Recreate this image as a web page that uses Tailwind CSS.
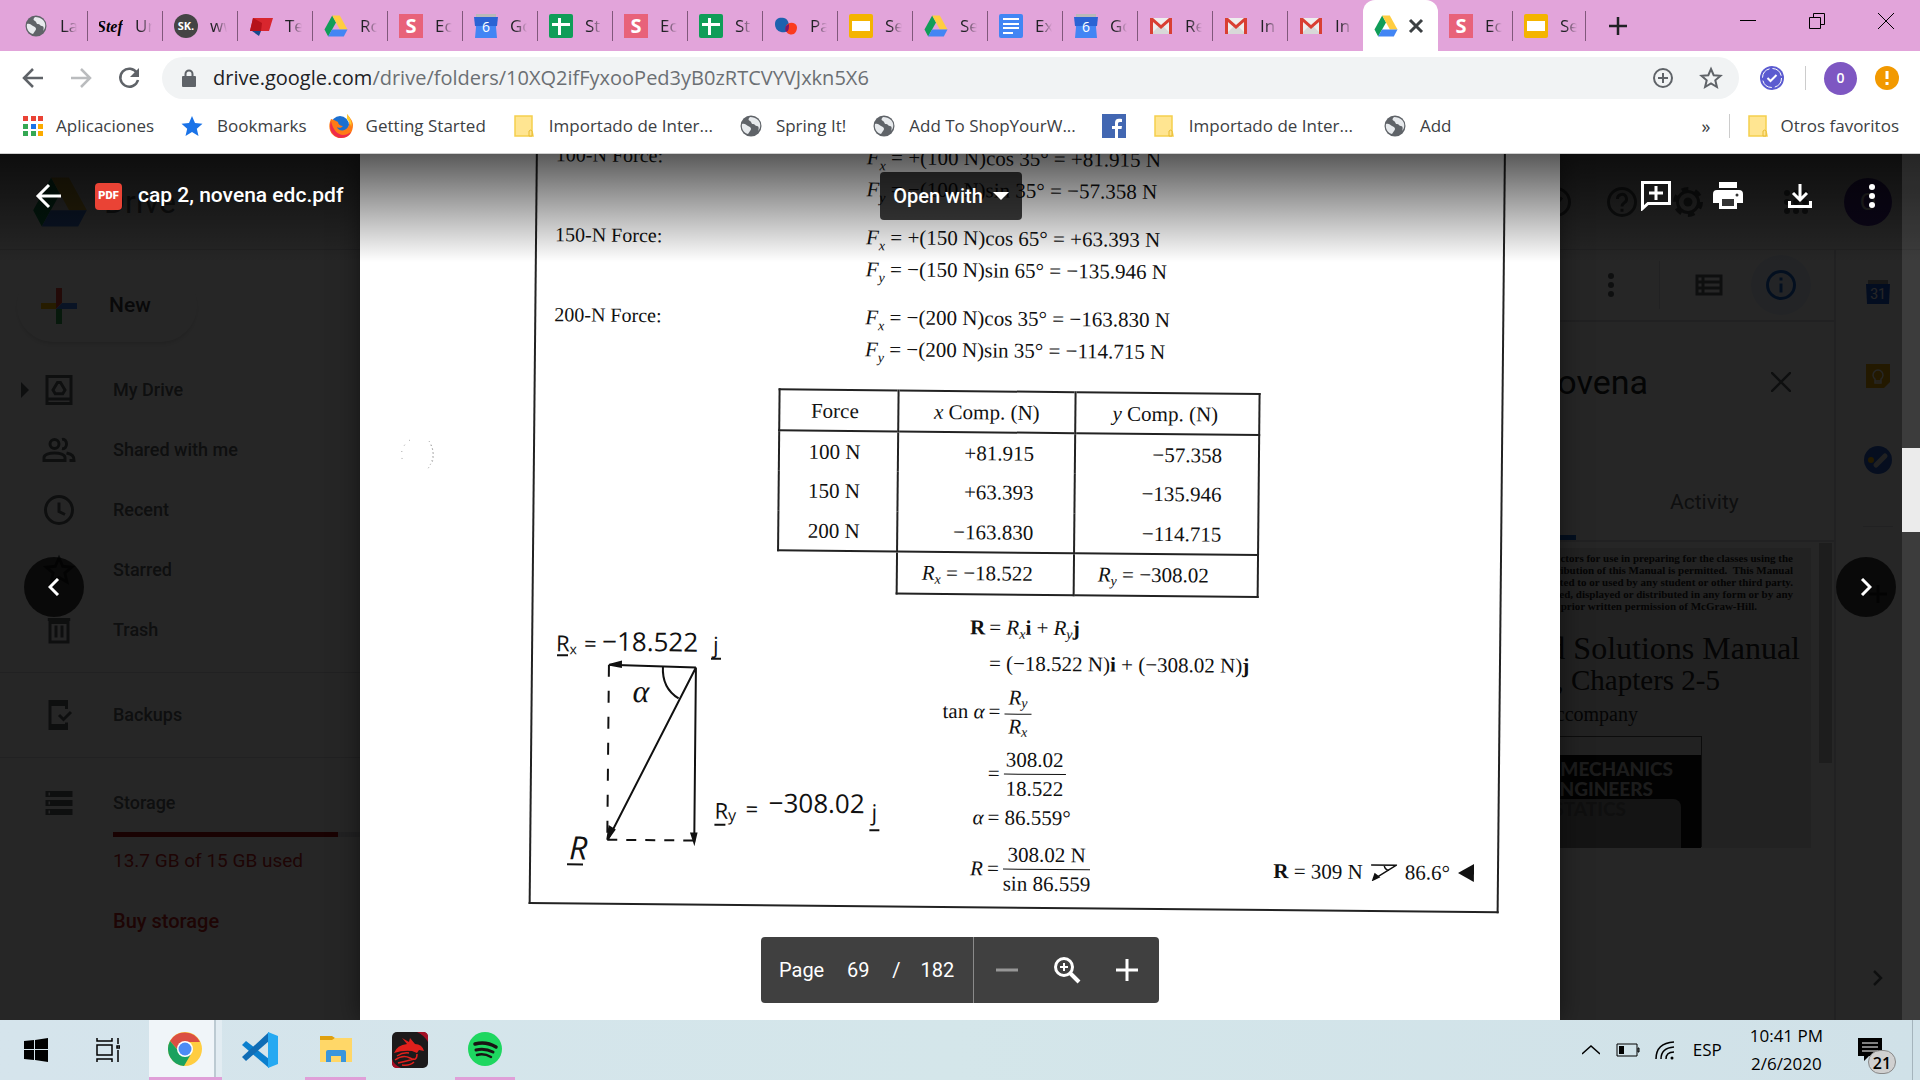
<!DOCTYPE html>
<html lang="es">
<head>
    <meta charset="UTF-8">
    <meta name="viewport" content="width=device-width, initial-scale=1.0">
    <title>cap 2, novena edc.pdf - Google Drive</title>
    <script src="https://cdn.jsdelivr.net/npm/@tailwindcss/browser@4"></script>
</head>
<body class="min-h-screen flex flex-col overflow-hidden bg-white font-['Open_Sans','Noto_Sans',sans-serif] text-[#3c4043]">

    <!-- Shared icons -->
    <svg class="hidden">
        <symbol id="globe" viewBox="0 0 24 24"><circle cx="12" cy="12" r="10.500" fill="#5f6368"/><path d="M3 10c3-1 4 1 6 2 3 1 4 3 2 5l-2 3c-4-1-7-5-6-10zM11 3c-2 2-2 3 0 4s1 3 3 3 2 2 4 2 2 3 1 5c3-3 3-8 0-11-2-2-5-3-8-3z" fill="#e7eaed"/></symbol>
        <symbol id="drive" viewBox="0 0 24 22"><path d="M8.200 0.500L0.500 14.500 4.200 21.500 12 7.500z" fill="#0f9d58"/><path d="M8.200 0.500h7.600l7.700 14h-7.600z" fill="#ffcd40"/><path d="M8 14.500h15.500l-3.700 7H4.200z" fill="#4285f4"/></symbol>
        <symbol id="sred" viewBox="0 0 24 24"><rect width="24" height="24" fill="#e8627a"/><text x="12" y="19" text-anchor="middle" font-family="Open Sans" font-size="20" font-weight="700" fill="#fff">S</text></symbol>
        <symbol id="cal6" viewBox="0 0 24 24"><path d="M1 4h22l-1 9 1 11H1l1-11z" fill="#4285f4"/><path d="M0 3h24l-1 9H1z" fill="#2a63d4"/><path d="M2 0h20v3H2z" fill="#b9b9b9"/><text x="12" y="18" text-anchor="middle" font-family="Open Sans" font-size="14" fill="#fff">6</text></symbol>
        <symbol id="sheets" viewBox="0 0 24 24"><rect width="24" height="24" rx="2" fill="#0f9d58"/><path d="M9 4h3v5h9v3h-9v9H9v-9H3V9h6z" fill="#fff"/></symbol>
        <symbol id="slides" viewBox="0 0 24 24"><rect width="24" height="24" rx="2" fill="#f4b400"/><path d="M3 7h18v10H3z" fill="#fff"/></symbol>
        <symbol id="docs" viewBox="0 0 24 24"><rect width="24" height="24" rx="2" fill="#4285f4"/><path d="M4 4h16v2H4zM4 9h16v2H4zM4 13h16v2H4zM4 18h10v2H4z" fill="#fff"/></symbol>
        <symbol id="gmail" viewBox="0 0 24 18"><path d="M2 1h20v16H2z" fill="#eee"/><path d="M2 17l8-8 2 2 2-2 8 8z" fill="#d8d8d8"/><path d="M1 17V1h3l8 7 8-7h3v16h-3V5l-8 7-8-7v12z" fill="#d93f33"/></symbol>
        <symbol id="folder" viewBox="0 0 20 24"><path d="M1 2h17v15l1 5H1z" fill="#ffe591" stroke="#f5cf4e" stroke-width="1.500"/><path d="M15 22v-5q2-2 3 0v5z" fill="#ffe591" stroke="#e8bb33"/></symbol>
    </svg>

    <!-- Tab strip -->
    <header class="flex h-[51px] bg-[#e2a4da] pl-[13px] text-[17px] text-[#202124]">
        <nav class="flex items-center [&>a]:relative [&>a]:flex [&>a]:h-[50px] [&>a]:w-[75px] [&>a]:items-center [&>a]:gap-3 [&>a]:pl-[11px] [&>a>svg]:size-6 [&>a>svg]:shrink-0 [&>a>span]:w-[17px] [&>a>span]:overflow-hidden [&>a>span]:[mask-image:linear-gradient(to_right,black_30%,transparent)] [&>a>i]:absolute [&>a>i]:right-0 [&>a>i]:h-[30px] [&>a>i]:w-px [&>a>i]:bg-[#80587b]">
            <a href="#"><svg><use href="#globe"/></svg><span>La</span><i></i></a>
            <a href="#"><svg viewBox="0 0 24 24"><text x="-2" y="18" font-family="Liberation Serif" font-size="16" font-style="italic" font-weight="700">Stef</text></svg><span>Un</span><i></i></a>
            <a href="#"><svg viewBox="0 0 24 24"><circle cx="12" cy="12" r="12" fill="#444"/><text x="12" y="16" text-anchor="middle" font-family="Open Sans" font-size="11" font-weight="700" fill="#fff">SK.</text></svg><span>ww</span><i></i></a>
            <a href="#"><svg viewBox="0 0 24 24"><path d="M4 4h20l-4 13H1z" fill="#d8262e"/><path d="M4 4l9 5-1 8H1z" fill="#b5121b"/><path d="M3 17h9l-2 5z" fill="#174a8c"/></svg><span>Te</span><i></i></a>
            <a href="#"><svg><use href="#drive"/></svg><span>Ro</span><i></i></a>
            <a href="#"><svg><use href="#sred"/></svg><span>Ec</span><i></i></a>
            <a href="#"><svg><use href="#cal6"/></svg><span>Go</span><i></i></a>
            <a href="#"><svg><use href="#sheets"/></svg><span>St</span><i></i></a>
            <a href="#"><svg><use href="#sred"/></svg><span>Ec</span><i></i></a>
            <a href="#"><svg><use href="#sheets"/></svg><span>St</span><i></i></a>
            <a href="#"><svg viewBox="0 0 24 24"><path d="M1 10c0-6 5-7 9-6s5 5 5 9-4 6-8 5-6-4-6-8z" fill="#1d62ae"/><path d="M12 12c1-4 10-5 11 1 0 5-3 9-8 7-3-1-4-5-3-8z" fill="#fb3b1e"/><path d="M12 12l3-2c0 4 0 7-3 8-1-2-1-4 0-6z" fill="#7b1a6a"/></svg><span>Pa</span><i></i></a>
            <a href="#"><svg><use href="#slides"/></svg><span>Se</span><i></i></a>
            <a href="#"><svg><use href="#drive"/></svg><span>Se</span><i></i></a>
            <a href="#"><svg><use href="#docs"/></svg><span>Ex</span><i></i></a>
            <a href="#"><svg><use href="#cal6"/></svg><span>Go</span><i></i></a>
            <a href="#"><svg><use href="#gmail"/></svg><span>Re</span><i></i></a>
            <a href="#"><svg><use href="#gmail"/></svg><span>In</span><i></i></a>
            <a href="#"><svg><use href="#gmail"/></svg><span>In</span></a>
            <!-- Active tab -->
            <a href="#" class="h-[51px]! rounded-t-xl bg-white">
                <svg><use href="#drive"/></svg>
                <svg viewBox="0 0 24 24" class="-ml-1"><path d="M4 6l12 12M16 6L4 18" stroke="#3c4043" stroke-width="3"/></svg>
            </a>
            <a href="#"><svg><use href="#sred"/></svg><span>Ec</span><i></i></a>
            <a href="#" class="w-[73px]!"><svg><use href="#slides"/></svg><span>Se</span><i></i></a>
        </nav>
        <button class="ml-5 w-7" aria-label="Nueva pestaña"><svg viewBox="0 0 24 24" class="w-6"><path d="M3 12h18M12 3v18" stroke="#202124" stroke-width="2.500"/></svg></button>
        <div class="ml-auto flex h-[42px] items-center gap-[53px] pr-[26px]">
            <button aria-label="Minimizar"><svg viewBox="0 0 16 16" class="size-4"><path d="M0 7.500h16" stroke="#000"/></svg></button>
            <button aria-label="Restaurar"><svg viewBox="0 0 16 16" class="size-4"><path d="M.5 4.500h11v11H.5zM4.500 4V.5h11v11H12" fill="none" stroke="#000"/></svg></button>
            <button aria-label="Cerrar"><svg viewBox="0 0 16 16" class="size-4"><path d="M0 0l16 16M16 0L0 16" stroke="#000"/></svg></button>
        </div>
    </header>

    <!-- Address bar -->
    <div class="flex h-[54px] items-center pl-5">
        <div class="flex w-[142px] items-center gap-[22px]">
            <button aria-label="Atrás"><svg viewBox="0 0 26 26" class="w-[26px]"><path d="M23 13H4M13 4l-9 9 9 9" fill="none" stroke="#5f6368" stroke-width="2.500"/></svg></button>
            <button aria-label="Adelante"><svg viewBox="0 0 26 26" class="w-[26px]"><path d="M3 13h19M13 4l9 9-9 9" fill="none" stroke="#babcbe" stroke-width="2.500"/></svg></button>
            <button aria-label="Recargar"><svg viewBox="0 0 26 26" class="w-[26px]"><path d="M21 8a9 9 0 1 0 1 7" fill="none" stroke="#5f6368" stroke-width="2.500"/><path d="M23 3v9h-9z" fill="#5f6368"/></svg></button>
        </div>
        <div class="flex h-[42px] flex-1 items-center rounded-full bg-[#f1f3f4] pl-5 pr-4">
            <svg viewBox="0 0 14 18" class="w-[14px]"><path d="M1 7h12q1 0 1 1v9q0 1-1 1H1q-1 0-1-1V8q0-1 1-1z" fill="#5f6368"/><path d="M3.500 8V5a3.500 3.500 0 0 1 7 0v3" fill="none" stroke="#5f6368" stroke-width="2"/></svg>
            <p class="ml-[17px] flex-1 text-xl text-[#6b6f73]"><span class="text-[#202124]">drive.google.com</span>/drive/folders/10XQ2ifFyxooPed3yB0zRTCVYVJxkn5X6</p>
            <svg viewBox="0 0 24 24" class="mr-6 w-6"><circle cx="12" cy="12" r="9" fill="none" stroke="#5f6368" stroke-width="2"/><path d="M7 12h10M12 7v10" stroke="#5f6368" stroke-width="2"/></svg>
            <svg viewBox="0 0 24 24" class="w-6"><path d="M12 3l2.700 6.200 6.800.6-5.200 4.500 1.600 6.700-5.900-3.600L6.100 21l1.600-6.700L2.500 9.800l6.800-.6z" fill="none" stroke="#5f6368" stroke-width="2"/></svg>
        </div>
        <div class="flex items-center pl-[21px] pr-[21px]">
            <svg viewBox="0 0 24 24" class="w-6"><circle cx="12" cy="12" r="12" fill="#5b5bd0"/><circle cx="12" cy="12" r="9.500" fill="none" stroke="#fff" stroke-dasharray="12 3"/><path d="M7.500 12l3 3 6-6" fill="none" stroke="#fff" stroke-width="2"/></svg>
            <i class="ml-[21px] mr-[18px] h-6 w-px bg-[#ccc]"></i>
            <span class="grid size-[33px] place-items-center rounded-full bg-[#7e57c2] text-sm font-semibold text-white">0</span>
            <svg viewBox="0 0 24 24" class="ml-[18px] w-6"><circle cx="12" cy="12" r="12" fill="#f29900"/><path d="M12 5v8M12 16v3" stroke="#fff" stroke-width="3"/></svg>
        </div>
    </div>

    <!-- Bookmarks bar -->
    <nav class="flex h-[49px] items-center border-b border-[#d0d0d0] pb-1.5 pl-[23px] pr-[21px] text-[17px] [&>a]:flex [&>a]:items-center [&>a]:gap-[13px] [&>a]:whitespace-nowrap [&>a]:mr-[26px]">
        <a href="#"><svg viewBox="0 0 20 20" class="w-5"><path d="M0 0h5v5H0zM8 0h5v5H8zM15 0h5v5h-5z" fill="#ea4335"/><path d="M0 8h5v5H0zM0 15h5v5H0zM8 15h5v5H8z" fill="#34a853"/><path d="M8 8h5v5H8z" fill="#1a73e8"/><path d="M15 8h5v5h-5zM15 15h5v5h-5z" fill="#fbab00"/></svg>Aplicaciones</a>
        <a href="#" class="mr-[22px]!"><svg viewBox="0 0 24 24" class="w-6"><path d="M12 2l3 7 7.500.7-5.700 5 1.700 7.300-6.500-3.900L5.500 22l1.700-7.300-5.700-5L9 9z" fill="#1a73e8"/></svg>Bookmarks</a>
        <a href="#"><svg viewBox="0 0 24 24" class="w-6"><circle cx="11" cy="11" r="9" fill="#1b6fd0"/><path d="M2 5C-3 16 4 24 12 24s12-6 12-13c0-4-3-7-6-11 1 5 4 8 1 13s-10 4-11 0c3 2 5 0 6-1-3 0-5-2-5-4L5 6z" fill="#ff7a16"/><path d="M18 0c3 4 6 8 4 13 0-3-2-5-4-8z" fill="#ffcb2e"/><path d="M2 7c-3 9 2 16 10 17 5 0 9-3 10-6-8 6-17 3-20-11z" fill="#ef2b4b"/></svg>Getting Started</a>
        <a href="#"><svg class="size-6"><use href="#folder"/></svg>Importado de Inter...</a>
        <a href="#"><svg class="size-6"><use href="#globe"/></svg>Spring It!</a>
        <a href="#"><svg class="size-6"><use href="#globe"/></svg>Add To ShopYourW...</a>
        <a href="#" aria-label="Facebook"><svg viewBox="0 0 24 24" class="w-6"><path d="M0 0h24v24H0z" fill="#4267b2"/><path d="M13 24v-9h-3v-3h3V9c0-4 2-5 7-4v3h-2c-2 0-2 1-2 2v2h4l-.5 3H16v9z" fill="#fff"/></svg></a>
        <a href="#"><svg class="size-6"><use href="#folder"/></svg>Importado de Inter...</a>
        <a href="#" class="pl-1"><svg class="size-6"><use href="#globe"/></svg>Add</a>
        <span class="ml-auto text-lg">»</span>
        <i class="mx-[18px] h-6 w-px bg-[#ccc]"></i>
        <a href="#" class="mr-0!"><svg class="h-6 w-5"><use href="#folder"/></svg>Otros favoritos</a>
    </nav>

    <main class="relative flex-1 overflow-hidden font-['Roboto',sans-serif]">

        <!-- Drive, behind the viewer -->
        <div class="absolute inset-0 flex flex-col bg-white text-[#5f6368]">
            <div class="flex h-24 shrink-0 items-center border-b border-[#dadce0] pl-8 pr-7">
                <svg class="h-[52px] w-14" preserveAspectRatio="none"><use href="#drive"/></svg>
                <span class="ml-4 text-[32px]">Drive</span>
                <div class="ml-auto flex items-center [&>svg]:w-[66px] [&>svg]:h-9">
                    <svg viewBox="0 0 24 24"><path d="M7 12l3 4 6-7" fill="none" stroke="#5f6368" stroke-width="2"/><circle cx="12" cy="12" r="9" fill="none" stroke="#5f6368" stroke-width="2"/></svg>
                    <svg viewBox="0 0 24 24"><circle cx="12" cy="12" r="9" fill="none" stroke="#5f6368" stroke-width="2"/><path d="M9 10a3 3 0 1 1 4.500 2.500Q12 13.500 12 15M12 16.500v2" fill="none" stroke="#5f6368" stroke-width="2"/></svg>
                    <svg viewBox="0 0 24 24"><circle cx="12" cy="12" r="7" fill="none" stroke="#5f6368" stroke-width="2"/><circle cx="12" cy="12" r="8.500" fill="none" stroke="#5f6368" stroke-width="3" stroke-dasharray="4.450 4.450"/><circle cx="12" cy="12" r="3" fill="#5f6368"/></svg>
                    <svg viewBox="0 0 24 24" class="ml-[42px]" fill="#5f6368"><circle cx="6" cy="6" r="2"/><circle cx="12" cy="6" r="2"/><circle cx="18" cy="6" r="2"/><circle cx="6" cy="12" r="2"/><circle cx="12" cy="12" r="2"/><circle cx="18" cy="12" r="2"/><circle cx="6" cy="18" r="2"/><circle cx="12" cy="18" r="2"/><circle cx="18" cy="18" r="2"/></svg>
                    <span class="ml-[15px] grid size-12 place-items-center rounded-full bg-[#512da8] text-2xl text-white">O</span>
                </div>
            </div>
            <div class="flex flex-1">
                <!-- Sidebar -->
                <aside class="w-[420px] pt-[19px] text-lg font-medium">
                    <button class="ml-[17px] flex h-[73px] w-[180px] items-center rounded-full pl-6 text-[21px] text-[#3c4043] shadow-md">
                        <svg viewBox="0 0 36 36" class="mr-8 w-9"><path d="M15 0h6v15l-6 6z" fill="#ea4335"/><path d="M0 15h15v6H0z" fill="#fbbc04"/><path d="M15 21h6v15h-6z" fill="#34a853"/><path d="M21 15h15v6H15z" fill="#4285f4"/></svg>New
                    </button>
                    <ul class="pt-[18px] [&>li]:flex [&>li]:h-[60px] [&>li]:items-center [&>li>svg]:ml-[41px] [&>li>svg]:mr-9 [&>li>svg]:size-9">
                        <li class="relative"><i class="absolute left-[21px] border-y-8 border-l-8 border-y-transparent border-l-[#5f6368]"></i><svg viewBox="0 0 24 24" fill="none" stroke="#5f6368" stroke-width="2"><path d="M4 3h16v18H4zM4 18h16"/><path d="M11 7h2l3 5-1.500 2.500h-5L8 12z"/></svg>My Drive</li>
                        <li><svg viewBox="0 0 24 24" fill="none" stroke="#5f6368" stroke-width="2"><circle cx="9" cy="8" r="3"/><path d="M2 19v-2c0-4 14-4 14 0v2z"/><path d="M14 5c4-1 4 7 0 6M17 14c4 1 5 2 5 5h-3"/></svg>Shared with me</li>
                        <li><svg viewBox="0 0 24 24" fill="none" stroke="#5f6368" stroke-width="2"><circle cx="12" cy="12" r="9"/><path d="M12 7v6l4 2"/></svg>Recent</li>
                        <li><svg viewBox="0 0 24 24" fill="none" stroke="#5f6368" stroke-width="2"><path d="M12 4l2.500 5.500 6 .6-4.600 4 1.400 5.900-5.300-3.100L6.700 20l1.400-5.900-4.600-4 6-.6z"/></svg>Starred</li>
                        <li><svg viewBox="0 0 24 24" fill="none" stroke="#5f6368" stroke-width="2"><path d="M6 7h12v13H6zM4.500 5h15M10 9v8M14 9v8"/></svg>Trash</li>
                    </ul>
                    <div class="mt-3 flex h-[86px] items-center border-y border-[#dadce0]"><svg viewBox="0 0 24 24" class="ml-[41px] mr-9 w-9" fill="none" stroke="#5f6368" stroke-width="2"><path d="M17 8V3H6v18h11v-4M6 5h11M6 19h11M12 12l3 3 5-5"/></svg>Backups</div>
                    <div class="flex h-[74px] items-center pt-4"><svg viewBox="0 0 24 24" class="ml-[41px] mr-9 w-9" fill="#5f6368"><path d="M3 4h18v4H3zM3 10h18v4H3zM3 16h18v4H3z"/><path d="M5 5h1v2H5zM5 11h1v2H5zM5 17h1v2H5z" fill="#fff"/></svg>Storage</div>
                    <div class="ml-[113px] h-[5px] bg-[#dadce0]"><div class="h-full w-[225px] bg-[#a50e0e]"></div></div>
                    <p class="ml-[113px] mt-2.5 text-[19px] leading-7 font-normal text-[#c5221f]">13.7 GB of 15 GB used</p>
                    <a href="#" class="ml-[113px] mt-8 block text-xl text-[#c5221f]">Buy storage</a>
                </aside>

                <!-- Details panel -->
                <section class="ml-auto flex w-[486px] flex-col border-r-2 border-[#dadce0]">
                    <div class="flex h-[72px] shrink-0 items-center justify-end border-b-2 border-[#dadce0] pr-[23px]">
                        <svg viewBox="0 0 24 24" class="w-9" fill="#5f6368"><circle cx="12" cy="6" r="2"/><circle cx="12" cy="12" r="2"/><circle cx="12" cy="18" r="2"/></svg>
                        <i class="ml-[30px] mr-[31px] h-12 w-px bg-[#dadce0]"></i>
                        <svg viewBox="0 0 24 24" class="mr-6 w-9"><path d="M3 5h18v14H3z" fill="#5f6368"/><path d="M5 7h2v2H5zM9 7h10v2H9zM5 11h2v2H5zM9 11h10v2H9zM5 15h2v2H5zM9 15h10v2H9z" fill="#fff"/></svg>
                        <span class="grid size-[60px] place-items-center rounded-full bg-[#e8f0fe]"><svg viewBox="0 0 24 24" class="w-9"><circle cx="12" cy="12" r="9" fill="none" stroke="#1967d2" stroke-width="2"/><path d="M12 7v2M12 11v6" stroke="#1967d2" stroke-width="2"/></svg></span>
                    </div>
                    <div class="flex h-[120px] shrink-0 items-center justify-end pr-[43px]">
                        <h2 class="text-[34px] leading-10 text-[#202124]">cap 2, novena</h2>
                        <svg viewBox="0 0 20 20" class="ml-[123px] w-5"><path d="M0 0l20 20M20 0L0 20" stroke="#5f6368" stroke-width="2.500"/></svg>
                    </div>
                    <div class="flex h-[100px] shrink-0 items-end border-b-2 border-[#dadce0] text-[21px]">
                        <div class="h-[5px] w-[226px] bg-[#1967d2]"></div>
                        <span class="ml-[94px] pb-[22px]">Activity</span>
                    </div>
                    <div class="flex items-start justify-end gap-2 pr-[2px]">
                        <!-- First page preview -->
                        <div class="mt-1.5 flex h-[300px] w-[420px] flex-col overflow-hidden bg-[#e0e0e0] pt-1 font-['Liberation_Serif',serif] text-[#222]">
                            <div class="flex flex-col items-end pr-[18px] text-[11px] font-bold leading-3 whitespace-nowrap">
                                <p>to teachers and instructors for use in preparing for the classes using the</p>
                                <p>sale or distribution of this Manual is permitted. &nbsp;This Manual</p>
                                <p>not be distributed to or used by any student or other third party.</p>
                                <p>reproduced, displayed or distributed in any form or by any</p>
                                <p class="pr-9">without the prior written permission of McGraw-Hill.</p>
                            </div>
                            <p class="mt-5 pr-[11px] text-right text-[32px] leading-8">and Solutions Manual</p>
                            <p class="pr-[91px] text-right text-[29px] leading-8">1, Chapters 2-5</p>
                            <p class="mt-1 pr-[173px] text-right text-[20px] leading-7">To accompany</p>
                            <div class="mr-[109px] mt-2 h-[111px] w-[290px] self-end border border-[#555] pt-[18px]">
                                <div class="h-[94px] bg-[#111] pt-1 font-['Lato',sans-serif] text-[19px] font-black leading-5 text-[#bbb]">
                                    <p class="pr-7 text-right">FOR MECHANICS</p>
                                    <p class="pr-12 text-right">FOR ENGINEERS</p>
                                    <div class="mr-5 h-[50px] rounded-tr-lg bg-[#888]"><p class="pr-[55px] text-right text-[#666]">STATICS</p></div>
                                </div>
                            </div>
                        </div>
                        <div class="mt-px h-[220px] w-[13px] bg-[#c1c1c1]"></div>
                    </div>
                </section>

                <!-- Side rail -->
                <aside class="relative flex w-[84px] flex-col items-center pt-[30px]">
                    <svg viewBox="0 0 24 24" class="w-6"><path d="M2 0h20v4H2z" fill="#999"/><path d="M0 4h24l-1 20H1z" fill="#1a56d6"/><text x="12" y="19" text-anchor="middle" font-family="Roboto" font-size="14" fill="#fff">31</text></svg>
                    <svg viewBox="0 0 24 24" class="mt-[60px] w-6"><path d="M0 0h24v18l-6 6H0z" fill="#e8a600"/><path d="M9 15a5 5 0 1 1 6 0v4H9zM9 17h6" fill="none" stroke="#fff" stroke-width="1.500"/></svg>
                    <svg viewBox="0 0 28 28" class="mt-[58px] w-7"><circle cx="14" cy="14" r="14" fill="#2a62d0"/><circle cx="7" cy="14" r="3" fill="#f4b400"/><path d="M12 19l9-9" stroke="#ddd" stroke-width="5" stroke-linecap="round"/></svg>
                    <i class="mt-[52px] h-px w-[30px] bg-[#dadce0]"></i>
                    <svg viewBox="0 0 18 18" class="mt-[58px] w-[18px]"><path d="M9 0v18M0 9h18" stroke="#5f6368" stroke-width="3"/></svg>
                    <svg viewBox="0 0 10 16" class="mb-[34px] mt-auto w-[10px]"><path d="M1 1l7 7-7 7" fill="none" stroke="#5f6368" stroke-width="2.500"/></svg>
                </aside>
            </div>
        </div>

        <!-- PDF viewer -->
        <div class="absolute inset-0 bg-black/85">
            <article class="relative mx-auto h-full w-[1200px] overflow-hidden bg-white font-['Liberation_Serif',serif] text-[21px] leading-8 text-[#111] shadow-[0_0_24px_rgba(0,0,0,0.5)]">
                <!-- The scanned sheet lies slightly turned on the page -->
                <div class="-mt-4 ml-[176px] flex h-[766px] w-[970px] origin-top-left rotate-[0.55deg] flex-col border-x-2 border-b-2 border-[#222]">
                    <div class="grid h-[248px] shrink-0 grid-cols-[311px_1fr] content-start gap-y-4 pl-[18px] [&_sub]:bottom-[-6px] [&_sub]:text-[14px]">
                        <span class="text-xl leading-8">100-N Force:</span>
                        <p><i>F<sub>x</sub></i> = +(100 N)cos 35° = +81.915 N<br><i>F<sub>y</sub></i> = −(100 N)sin 35° = −57.358 N</p>
                        <span class="text-xl leading-8">150-N Force:</span>
                        <p><i>F<sub>x</sub></i> = +(150 N)cos 65° = +63.393 N<br><i>F<sub>y</sub></i> = −(150 N)sin 65° = −135.946 N</p>
                        <span class="text-xl leading-8">200-N Force:</span>
                        <p><i>F<sub>x</sub></i> = −(200 N)cos 35° = −163.830 N<br><i>F<sub>y</sub></i> = −(200 N)sin 35° = −114.715 N</p>
                    </div>

                    <table class="ml-[243px] h-[203px] w-[480px] table-fixed border-collapse [&_sub]:text-[14px] [&_td]:p-0 [&_th]:p-0 [&_th]:font-normal">
                        <colgroup><col class="w-[119px]"><col class="w-[177px]"><col class="w-[184px]"></colgroup>
                        <thead>
                            <tr class="h-[41px] border-2 border-[#222]">
                                <th class="pr-2!">Force</th>
                                <th class="border-x-2 border-[#222]"><i>x</i> Comp. (N)</th>
                                <th class="pr-1!"><i>y</i> Comp. (N)</th>
                            </tr>
                        </thead>
                        <tbody class="border-2 border-[#222] text-right">
                            <tr class="h-10"><td class="pr-2! text-center">100 N</td><td class="border-x-2 border-[#222] pr-10!">+81.915</td><td class="pr-9!">−57.358</td></tr>
                            <tr class="h-10"><td class="pr-2! text-center">150 N</td><td class="border-x-2 border-[#222] pr-10!">+63.393</td><td class="pr-9!">−135.946</td></tr>
                            <tr class="h-10"><td class="pr-2! text-center">200 N</td><td class="border-x-2 border-[#222] pr-10!">−163.830</td><td class="pr-9!">−114.715</td></tr>
                        </tbody>
                        <tfoot>
                            <tr class="h-[42px] text-right"><td></td><td class="border-2 border-[#222] pr-10!"><i>R<sub>x</sub></i> = −18.522</td><td class="border-2 border-[#222] pr-12!"><i>R<sub>y</sub></i> = −308.02</td></tr>
                        </tfoot>
                    </table>

                    <div class="mt-3.5 flex flex-1">
                        <!-- Force diagram -->
                        <svg viewBox="0 0 370 298" class="h-[298px] w-[370px] shrink-0" fill="none" stroke="#111" stroke-width="2">
                            <path d="M163 61L76 59M163 61v174M163 61L77 233"/>
                            <path d="M76 59v174" stroke-dasharray="12 14"/>
                            <path d="M76 234h87" stroke-dasharray="10 9"/>
                            <path d="M130 60q-1 22 16 32"/>
                            <path d="M77 59l11-3v5zM163 236l-3-9h5zM76 234l2-13 5 3z" fill="#111"/>
                            <path d="M24 50h11M178 52h10M183 218h11M338 222h10M36 259h16"/>
                            <g fill="#111" stroke="none" font-family="Open Sans, sans-serif" font-size="22">
                                <text x="23" y="46">R<tspan font-size="14" dy="3">x</tspan></text>
                                <text x="51" y="46">=</text>
                                <text x="69" y="45" font-size="26">−18.522</text>
                                <text x="180" y="46">j</text>
                                <text x="100" y="96" font-size="32" font-style="italic" font-family="Liberation Serif">α</text>
                                <text x="183" y="212">R<tspan font-size="16" dy="2">y</tspan></text>
                                <text x="214" y="210">=</text>
                                <text x="237" y="205" font-size="26">−308.02</text>
                                <text x="340" y="212">j</text>
                                <text x="38" y="254" font-size="32" font-style="italic">R</text>
                            </g>
                        </svg>
                        <!-- Resultant -->
                        <div class="grid flex-1 grid-cols-[82px_1fr] grid-rows-[36px_36px_60px_64px_24px_78px] content-start items-center gap-x-1 leading-6 [&_sub]:text-[14px] [&>span]:text-right">
                            <span><b>R</b></span><p>= <i>R<sub>x</sub></i><b>i</b> + <i>R<sub>y</sub></i><b>j</b></p>
                            <span></span><p>= (−18.522 N)<b>i</b> + (−308.02 N)<b>j</b></p>
                            <span>tan <i>α</i></span>
                            <p class="flex items-center gap-1">= <span class="flex flex-col text-center"><i class="border-b border-[#111] px-1 pb-1"><span>R<sub>y</sub></span></i><i>R<sub>x</sub></i></span></p>
                            <span></span>
                            <p class="flex items-center gap-1">= <span class="flex flex-col text-center leading-7"><span class="border-b border-[#111] px-0.5">308.02</span><span>18.522</span></span></p>
                            <span><i>α</i></span><p>= 86.559°</p>
                            <span><i>R</i></span>
                            <div class="flex items-center gap-1">= <span class="flex flex-col text-center leading-7"><span class="border-b border-[#111] px-0.5">308.02 N</span><span>sin 86.559</span></span>
                                <p class="ml-auto flex items-center gap-2 pr-[23px]"><span><b>R</b> = 309 N</span>
                                    <svg viewBox="0 0 26 18" class="w-[26px]" fill="none" stroke="#111" stroke-width="1.500"><path d="M0 2h25L3 16M13 2q1 5 5 5"/><path d="M2 17l2-6 4 3z" fill="#111"/></svg>
                                    <span>86.6°</span>
                                    <svg viewBox="0 0 16 18" class="w-4"><path d="M16 0v18L0 9z" fill="#111"/></svg>
                                </p>
                            </div>
                        </div>
                    </div>
                </div>
                <!-- Punch hole shadow in the margin -->
                <svg viewBox="0 0 40 36" class="absolute left-10 top-[283px] w-10" fill="none" stroke="#999"><path d="M10 3Q-3 12 4 27" stroke-dasharray="1 6"/><path d="M29 4q9 14-2 29M31 8q4 9 1 18" stroke-dasharray="1 3"/></svg>
            </article>

            <div class="pointer-events-none absolute inset-x-0 top-0 h-[108px] bg-linear-to-b from-black/65 to-transparent"></div>

            <!-- Scrollbar -->
            <div class="absolute inset-y-0 right-0 w-[18px] bg-white/10 pt-[294px]"><div class="h-[84px] bg-[#ebebeb]"></div></div>

            <!-- Viewer toolbar -->
            <div class="absolute inset-x-0 top-0 mr-[18px] flex h-[84px] items-center px-[15px] text-white">
                <div class="flex flex-1 items-center">
                    <button aria-label="Close" class="ml-[18px]"><svg viewBox="0 0 32 32" class="w-8"><path d="M28 16H6M16 5L5 16l11 11" fill="none" stroke="#fff" stroke-width="3"/></svg></button>
                    <span class="ml-[30px] grid size-[27px] place-items-center rounded bg-[#ea4335] text-[11px] font-black">PDF</span>
                    <h1 class="ml-4 text-[21px] font-medium">cap 2, novena edc.pdf</h1>
                </div>
                <button class="flex h-12 w-[142px] items-center justify-center gap-2.5 rounded bg-black/75 text-xl font-medium">Open with<i class="border-x-8 border-t-8 border-x-transparent border-t-white"></i></button>
                <div class="flex flex-1 justify-end gap-[42px] [&_svg]:size-[30px]">
                    <button aria-label="Add comment"><svg viewBox="0 0 30 30"><path d="M1.500 1.500h27v21H7l-5.500 5z" fill="none" stroke="#fff" stroke-width="3"/><path d="M15 5v14M8 12h14" stroke="#fff" stroke-width="3"/></svg></button>
                    <button aria-label="Print"><svg viewBox="0 0 30 30"><path d="M6 1h18v6H6zM4 9h22q4 0 4 4v9h-6v6H6v-6H0v-9q0-4 4-4z" fill="#fff"/><path d="M9 18h12v7H9z" fill="#333"/><circle cx="24" cy="14" r="1.500" fill="#333"/></svg></button>
                    <button aria-label="Download"><svg viewBox="0 0 30 30" fill="none" stroke="#fff" stroke-width="3"><path d="M15 3v15M8 12l7 7 7-7M4.500 20v5.500h21V20"/></svg></button>
                    <button aria-label="More actions"><svg viewBox="0 0 30 30" fill="#fff"><circle cx="15" cy="6" r="3"/><circle cx="15" cy="15" r="3"/><circle cx="15" cy="24" r="3"/></svg></button>
                </div>
            </div>

            <button aria-label="Previous" class="absolute left-6 top-1/2 grid size-[60px] -translate-y-1/2 place-items-center rounded-full bg-black/75"><svg viewBox="0 0 12 18" class="w-3"><path d="M10 1L2 9l8 8" fill="none" stroke="#fff" stroke-width="3"/></svg></button>
            <button aria-label="Next" class="absolute right-6 top-1/2 grid size-[60px] -translate-y-1/2 place-items-center rounded-full bg-black/75"><svg viewBox="0 0 12 18" class="w-3"><path d="M2 1l8 8-8 8" fill="none" stroke="#fff" stroke-width="3"/></svg></button>

            <!-- Page controls -->
            <div class="absolute bottom-[17px] left-1/2 flex h-[66px] w-[398px] -translate-x-1/2 items-center rounded bg-[#404040] text-xl text-white">
                <label for="page" class="ml-[18px]">Page</label>
                <input id="page" value="69" class="ml-4 w-9 bg-transparent text-center">
                <span class="ml-4">/</span>
                <span class="ml-5">182</span>
                <i class="ml-auto h-full w-px bg-[#8a8a8a]"></i>
                <div class="flex w-[185px] items-center justify-around px-1">
                    <button aria-label="Zoom out"><svg viewBox="0 0 22 22" class="w-[22px]"><path d="M0 11h22" stroke="#979797" stroke-width="3"/></svg></button>
                    <button aria-label="Fit to width"><svg viewBox="0 0 28 28" class="w-7" fill="none" stroke="#fff"><circle cx="11" cy="11" r="8.500" stroke-width="3"/><path d="M17 17l9 9" stroke-width="4"/><path d="M11 7v8M7 11h8" stroke-width="2"/></svg></button>
                    <button aria-label="Zoom in"><svg viewBox="0 0 22 22" class="w-[22px]"><path d="M0 11h22M11 0v22" stroke="#fff" stroke-width="3"/></svg></button>
                </div>
            </div>
        </div>
    </main>

    <!-- Windows taskbar -->
    <footer class="flex h-[60px] items-center bg-linear-to-r from-[#d5e4ec] via-[#d4e6ea] to-[#d0e1e8] text-[17px] text-black">
        <button aria-label="Inicio" class="ml-6"><svg viewBox="0 0 24 24" class="w-6"><path d="M0 3l10-1v9H0zM11 2l13-2v11H11zM0 12h10v10L0 21zM11 12h13v12l-13-2z"/></svg></button>
        <button aria-label="Vista de tareas" class="ml-12"><svg viewBox="0 0 24 24" class="w-6" fill="none" stroke="#000" stroke-width="1.500"><path d="M1 7h15v10H1zM1 0v3h15V0M1 24v-3h15v3M22 0v6M22 12v12"/><path d="M21 8h3v2h-3z"/></svg></button>
        <div class="ml-[29px] flex h-full w-[73px] border-b-[3px] border-[#e09fd8] bg-[#e2ecf2]">
            <button aria-label="Chrome" class="flex w-[67px] items-center justify-center border-r-2 border-[#bccad2] bg-[#f0f5f9] pl-[6px]"><svg viewBox="0 0 34 34" class="w-[34px]"><circle cx="17" cy="17" r="17" fill="#ffcd41"/><path d="M2 9A17 17 0 0 1 32 10H17q-6 0-7 8z" fill="#db4f43"/><path d="M2 9a17 17 0 0 0 14 25l7-12-9 1z" fill="#1aa25f"/><circle cx="17" cy="17" r="8" fill="#fff"/><circle cx="17" cy="17" r="6.500" fill="#4c8bf5"/></svg></button>
        </div>
        <button aria-label="Visual Studio Code" class="ml-5"><svg viewBox="0 0 36 36" class="w-9"><path d="M0 13l4-4L27 27v9z" fill="#0a7fce"/><path d="M0 25l4 4L27 9V0z" fill="#0f6cb5"/><path d="M26 0l10 4v28l-10 4z" fill="#26a9f2"/></svg></button>
        <button aria-label="Explorador" class="ml-[27px] flex h-full w-[61px] items-center justify-center border-b-[3px] border-[#e09fd8]"><svg viewBox="0 0 32 28" class="w-8"><path d="M0 1h12l3 2-2 3H0z" fill="#e0a00e"/><path d="M0 5h12l3-2h17v24H0z" fill="#ffd768"/><path d="M6 27V17q0-2 2-2h16q2 0 2 2v10h-5v-6H11v6z" fill="#3a96dd"/></svg></button>
        <button aria-label="Dragon" class="ml-[26px]"><svg viewBox="0 0 36 36" class="w-9"><rect width="36" height="36" rx="5" fill="#1c1a1b"/><path d="M25 0h6q5 0 5 5v5q-4-7-11-10zM0 27q2 6 9 9H5q-5 0-5-5z" fill="#a50f24"/><path d="M2 21q3-8 13-9L10 6l7 4 1-4 5 6q7 0 9 7l-5-1-2 3-5-2q-9-1-18 2z" fill="#e0201c"/><path d="M3 28q8-6 15-2t7-4M6 31q9-2 16-4M10 33q8 1 12-3M5 24q6-4 12-3" fill="none" stroke="#e0201c" stroke-width="1.500"/></svg></button>
        <button aria-label="Spotify" class="ml-[27px] flex h-full w-[60px] items-center justify-center border-b-[3px] border-[#e09fd8]"><svg viewBox="0 0 34 34" class="w-[34px]" fill="none" stroke="#191414" stroke-linecap="round"><circle cx="17" cy="17" r="17" fill="#1ed760" stroke="none"/><path d="M7 12q11-3 21 3" stroke-width="3.500"/><path d="M8 18q9-2 17 2" stroke-width="3"/><path d="M9 23q7-2 14 2" stroke-width="2.500"/></svg></button>

        <div class="ml-auto flex items-center">
            <svg viewBox="0 0 18 10" class="w-[18px]"><path d="M0 9l9-8 9 8" fill="none" stroke="#000" stroke-width="1.500"/></svg>
            <svg viewBox="0 0 24 14" class="ml-4 w-6"><path d="M1 1h20v12H1zM22 5h1v4h-1z" fill="none" stroke="#000"/><path d="M3 3h5v8H3z"/></svg>
            <svg viewBox="0 0 20 20" class="ml-[15px] w-5" fill="none" stroke="#000" stroke-width="1.500"><path d="M1 19Q1 3 19 2M6 19Q6 8 19 7M11 19q0-7 8-7"/><circle cx="17" cy="18" r="1.500" fill="#000" stroke="none"/></svg>
            <span class="ml-[18px]">ESP</span>
            <time class="ml-7 text-center leading-7">10:41 PM<br>2/6/2020</time>
            <button aria-label="Notificaciones" class="relative ml-[35px]"><svg viewBox="0 0 24 24" class="w-6"><path d="M0 0h24v18H11l-5 5v-5H0z"/><path d="M4 5h16M4 9h16M4 13h16" stroke="#fff"/></svg><span class="absolute -right-3.5 top-3 grid h-6 w-7 place-items-center rounded-full border border-[#888] bg-[#d0d0d0] text-base font-semibold">21</span></button>
            <i class="ml-[30px] mr-[7px] h-[60px] w-px bg-[#a5b4bc]"></i>
        </div>
    </footer>
</body>
</html>
